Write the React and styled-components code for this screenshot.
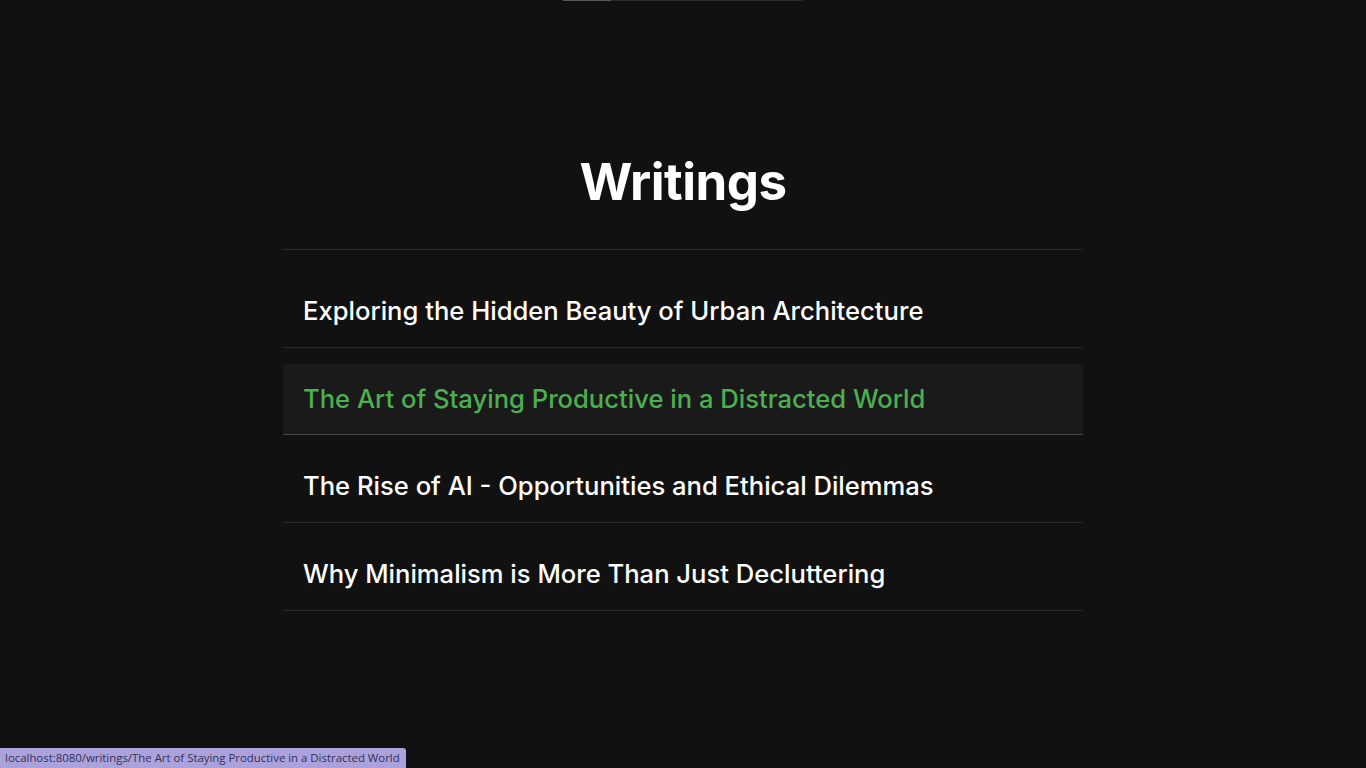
import styled, { createGlobalStyle } from "styled-components";

const GlobalStyle = createGlobalStyle`
    html, body {
        margin: 0;
        padding: 0;
        background-color: #111111;
    }
    body {
        font-family: 'Inter', 'Noto Sans', sans-serif;
        color: #ffffff;
    }
`;

const Page = styled.div`
    min-height: 100vh;
    background-color: #111111;
    display: flex;
    flex-direction: column;
    align-items: center;
`;

const ProgressTrack = styled.div`
    width: 240px;
    height: 1px;
    background-color: #2a2a2a;
    display: flex;
`;

const ProgressFill = styled.div`
    height: 100%;
    background-color: #5a5a5a;
`;

const Content = styled.main`
    width: 800px;
    padding-top: 150px;
`;

const Title = styled.h1`
    margin: 0 0 36px;
    font-family: 'Inter', sans-serif;
    font-size: 51px;
    line-height: 62px;
    font-weight: 700;
    letter-spacing: -0.5px;
    text-align: center;
    color: #ffffff;
`;

const List = styled.ul`
    list-style: none;
    margin: 0;
    padding: 10px 0 0;
    border-top: 1px solid #2a2a2a;
`;

const Item = styled.li`
    margin-top: 16px;
    border-bottom: 1px solid ${props => props.active ? '#474747' : '#2a2a2a'};
    background-color: ${props => props.active ? '#1a1a1a' : 'transparent'};
`;

const ItemLink = styled.a`
    display: block;
    padding: 20px 20px;
    font-size: 25.6px;
    line-height: 1.2;
    font-weight: 500;
    text-decoration: none;
    color: ${props => props.active ? '#4caf50' : '#ffffff'};
`;

const StatusBar = styled.div`
    position: fixed;
    left: 0;
    bottom: 0;
    height: 20px;
    padding: 0 6px 0 5px;
    display: flex;
    align-items: center;
    background-color: #aba2dc;
    color: #33305a;
    font-family: 'Open Sans', 'Noto Sans', sans-serif;
    font-size: 11.4px;
    line-height: 18px;
    border-top-right-radius: 3px;
`;

const posts = [
    "Exploring the Hidden Beauty of Urban Architecture",
    "The Art of Staying Productive in a Distracted World",
    "The Rise of AI - Opportunities and Ethical Dilemmas",
    "Why Minimalism is More Than Just Decluttering",
];

const App = () => {
    const hovered = 1;
    return (
        <Page>
            <GlobalStyle />
            <ProgressTrack>
                <ProgressFill style={{ width: "20%" }} />
            </ProgressTrack>
            <Content>
                <Title>Writings</Title>
                <List>
                    {posts.map((title, i) => (
                        <Item key={title} active={i === hovered}>
                            <ItemLink href={`/writings/${title}`} active={i === hovered}>
                                {title}
                            </ItemLink>
                        </Item>
                    ))}
                </List>
            </Content>
            <StatusBar>localhost:8080/writings/{posts[hovered]}</StatusBar>
        </Page>
    );
};

export default App;
